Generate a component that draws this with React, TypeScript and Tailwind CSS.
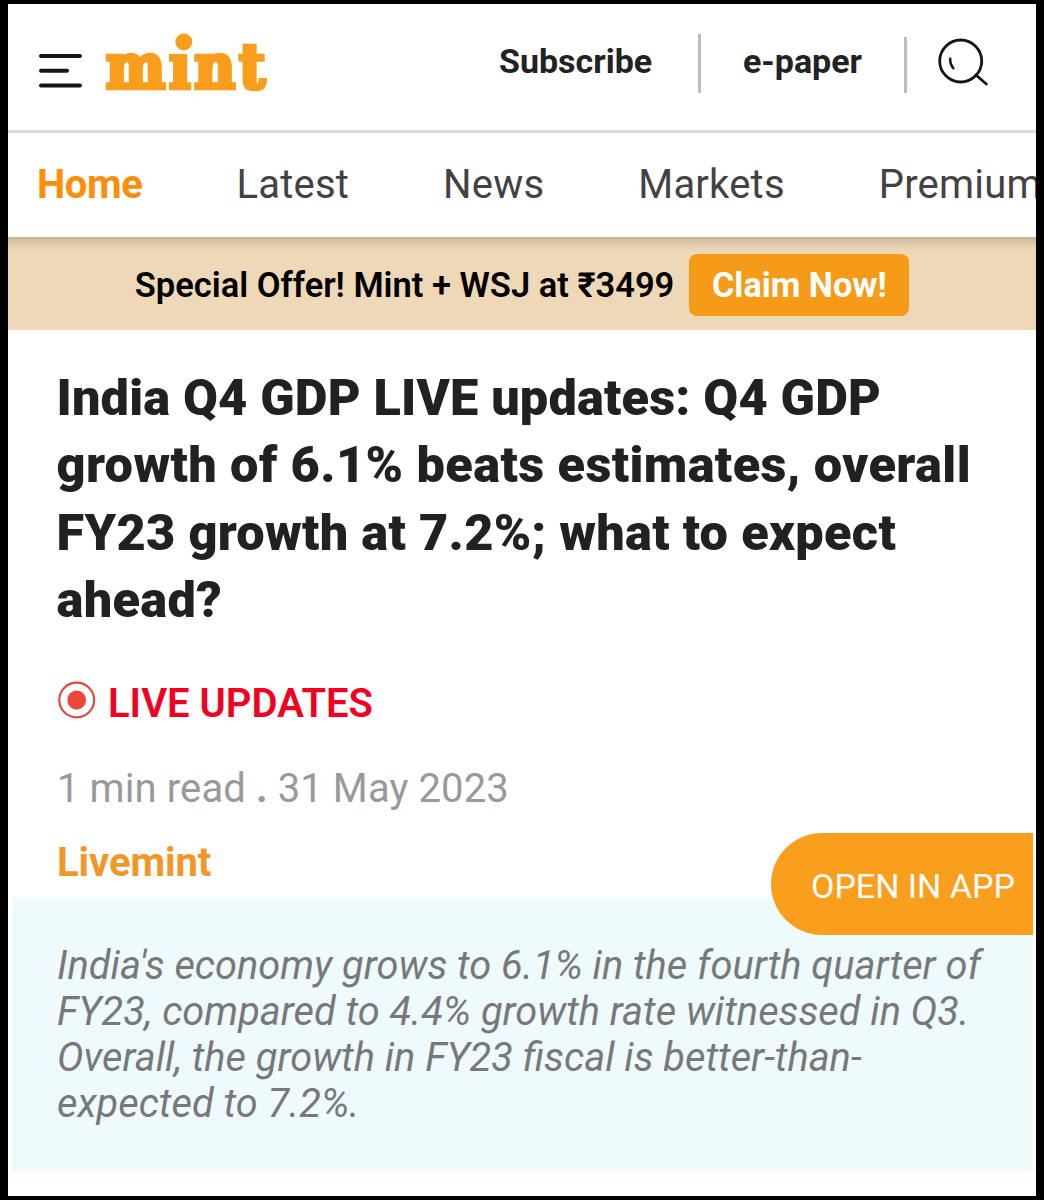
const navItems = ["Latest", "News", "Markets", "Premium"];

const MenuIcon = () => (
  <svg className="mt-12 h-9 w-11 shrink-0" viewBox="0 0 44 36" fill="none" stroke="#141414" strokeWidth="4" strokeLinecap="round">
    <path d="M3 4h39M3 18.7h26M3 33.5h39" />
  </svg>
);

const MintLogo = () => (
  <svg className="ml-5 mt-6 h-[68px] w-[170px] shrink-0" viewBox="0 0 170 68" fill="#f99d1c" role="img" aria-label="mint">
    <text
      x="4"
      y="59.8"
      textLength="159"
      lengthAdjust="spacing"
      stroke="#f99d1c"
      strokeWidth="4.4"
      className="font-['DejaVu_Serif_Condensed','DejaVu_Serif',serif] text-[62px] font-bold"
    >
      mint
    </text>
    {/* the logo's dot is larger and higher than the font's own */}
    <rect x="68" y="0" width="26" height="26" fill="#fff" />
    <circle cx="81.8" cy="14" r="8.5" />
  </svg>
);

const SearchIcon = () => (
  <svg className="ml-[30px] mt-8 size-14 shrink-0" viewBox="0 0 56 56" fill="none" stroke="#141414" strokeWidth="2.8" strokeLinecap="round">
    <circle cx="23.7" cy="25" r="21" />
    <path d="M39 39L49.3 48" />
    <path d="M13.2 22.8C13 27 14.4 30 16.4 32.3" strokeWidth="2.5" />
  </svg>
);

const LiveIcon = () => (
  <svg className="size-[38px] shrink-0" viewBox="0 0 38 38" fill="none">
    <circle cx="18.7" cy="19" r="17.4" stroke="#e2493f" strokeWidth="2.2" />
    <circle cx="18.7" cy="19" r="9.4" fill="#ee4539" />
  </svg>
);

const Header = () => (
  <header className="flex h-[129px] shrink-0 items-start border-b-[3px] border-[#dcdcdc] pl-[30px]">
    <MenuIcon />
    <MintLogo />
    <span className="ml-[227px] mt-[37px] w-[153px] whitespace-nowrap text-[34px] font-bold leading-10 text-[#222]">Subscribe</span>
    <span className="ml-[46px] mt-[30px] h-[59px] w-[3px] bg-[#bdbdbd]" />
    <span className="ml-[42px] mt-[37px] w-[119px] whitespace-nowrap text-[34px] font-bold leading-10 text-[#222]">e-paper</span>
    <span className="ml-[42px] mt-[33px] h-14 w-[3px] bg-[#bebdb8]" />
    <SearchIcon />
  </header>
);

const Nav = () => (
  <nav className="relative flex h-[104px] shrink-0 items-center gap-[94px] pl-[29px] text-[40px] leading-[46px]">
    <span className="w-[106.5px] font-bold tracking-[-0.4px] text-[#fc8e0a]">Home</span>
    {navItems.map((item) => (
      <span key={item} className="tracking-[0.2px] text-[#424242]">
        {item}
      </span>
    ))}
  </nav>
);

const OfferBar = () => (
  <div className="flex h-[93px] shrink-0 items-center justify-center gap-[15px] bg-[#efd8b8] pb-0.5 pt-1 text-[34.5px] font-semibold leading-10 shadow-[inset_0_14px_12px_-10px_rgba(0,0,0,0.22)]">
    <span className="whitespace-nowrap text-black">Special Offer! Mint + WSJ at ₹3499</span>
    <button className="h-[62px] w-[220px] whitespace-nowrap rounded-lg bg-[#f69b18] text-[34.2px] font-bold text-white">Claim Now!</button>
  </div>
);

export default function App() {
  return (
    <div className="h-[1200px] w-[1044px] overflow-hidden bg-black px-2 py-1 font-['Roboto',sans-serif]">
      <div className="relative flex h-full flex-col overflow-hidden bg-white">
        <Header />
        <Nav />
        <OfferBar />

        <main className="flex flex-col">
          <h1 className="ml-[48.5px] mt-[33.6px] text-[50.5px] font-black leading-[67.6px] tracking-[0.3px] text-[#212121]">
            <span className="tracking-[0.17px]">India Q4 GDP LIVE updates: Q4 GDP</span>
            <br />
            <span className="tracking-[0.4px]">growth of 6.1% beats estimates, overall</span>
            <br />
            FY23 growth at 7.2%; what to expect
            <br />
            ahead?
          </h1>

          <div className="ml-[50px] mt-[47px] flex h-[46px] items-start">
            <LiveIcon />
            <span className="ml-3 text-[40px] font-semibold leading-[46px] text-[#f2001f]">LIVE UPDATES</span>
          </div>

          <p className="ml-[49px] mt-[39.5px] whitespace-pre text-[40px] leading-[46px] tracking-[0.1px] text-[#999]">
            1 min read <b>.</b> 31 May 2023
          </p>
          <p className="ml-[49px] mt-7 text-[40px] font-bold leading-[46px] tracking-[-0.1px] text-[#f3962a]">Livemint</p>

          <p className="ml-1 mr-[3px] mt-[10.5px] h-[274px] bg-[#effafd] pl-[45px] pt-[46px] text-[39.75px] italic leading-[46px] text-[#77787a]">
            India's economy grows to 6.1% in the fourth quarter of
            <br />
            FY23, compared to 4.4% growth rate witnessed in Q3.
            <br />
            Overall, the growth in FY23 fiscal is better-than-
            <br />
            expected to 7.2%.
          </p>
        </main>

        <button className="absolute right-[3px] top-[829px] h-[102px] w-[262px] whitespace-nowrap rounded-l-full bg-[#f99e1d] pl-10 pt-1 text-left text-[34px] leading-10 text-white">
          OPEN IN APP
        </button>
      </div>
    </div>
  );
}
